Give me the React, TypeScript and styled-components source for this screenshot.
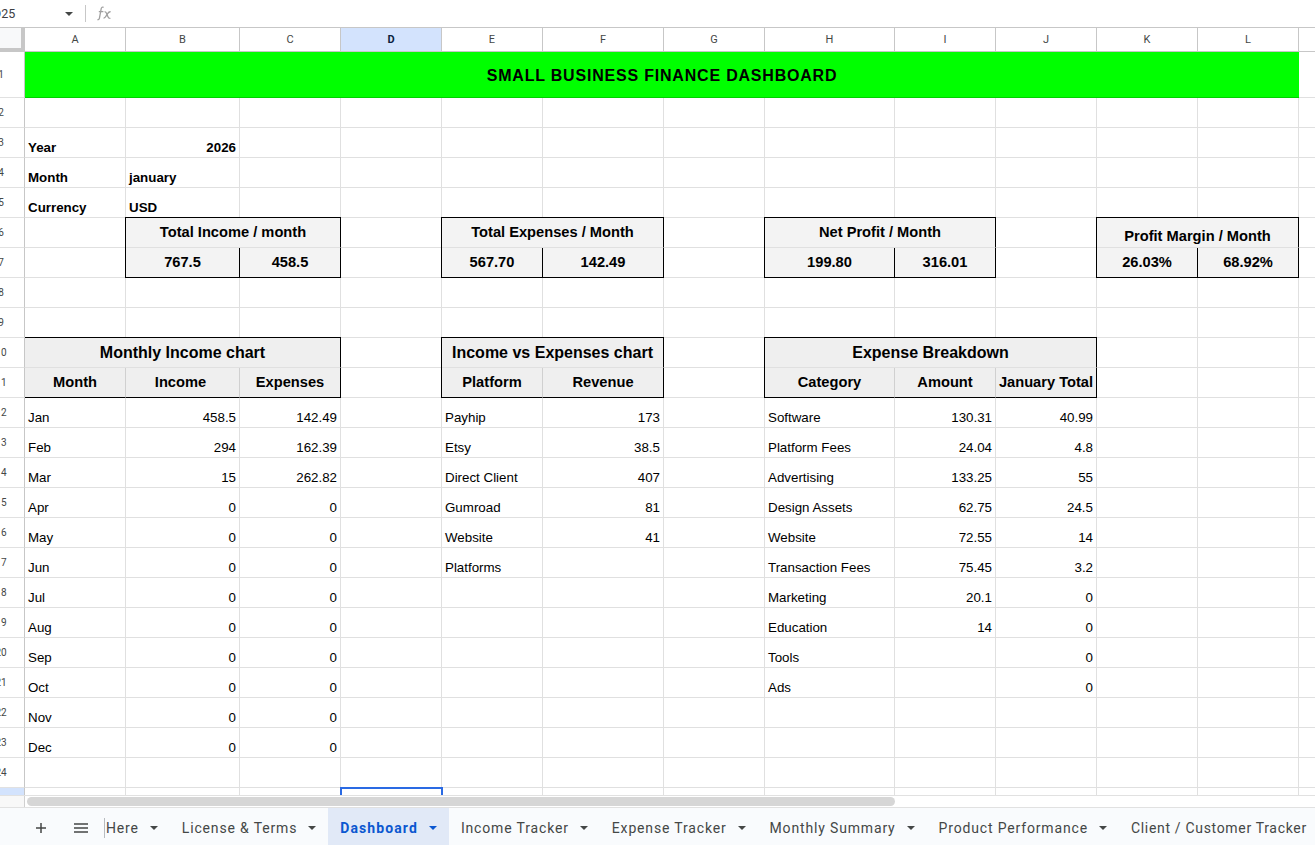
import React from "react";
import styled, { createGlobalStyle } from "styled-components";

const Global = createGlobalStyle`
  html, body { margin: 0; padding: 0; height: 100%; overflow: hidden; background: #fff; }
  #root { height: 100%; }
`;

const Page = styled.div`
  height: 845px;
  width: 1315px;
  display: flex;
  flex-direction: column;
  overflow: hidden;
  font-family: "Liberation Sans", Arial, sans-serif;
`;

const FormulaBar = styled.div`
  height: 27px;
  flex: none;
  display: flex;
  align-items: center;
  box-sizing: border-box;
  background: #fff;
`;

const NameBox = styled.div`
  width: 72px;
  flex: none;
  margin-left: -7px;
  font-family: Roboto, sans-serif;
  font-size: 12.5px;
  color: #3c4043;
`;

const Caret = styled.span<{ $color?: string }>`
  display: inline-block;
  flex: none;
  width: 0;
  height: 0;
  border-left: 4px solid transparent;
  border-right: 4px solid transparent;
  border-top: 4px solid ${(p) => p.$color ?? "#444746"};
`;

const VDivider = styled.div`
  width: 1px;
  height: 17px;
  margin: 0 11px 0 12px;
  background: #c7c7c7;
`;

const Fx = styled.svg`
  width: 15px;
  height: 15px;
`;

const Sheet = styled.div`
  height: 768px;
  flex: none;
  overflow: hidden;
  display: grid;
  grid-template-columns: 25px 101px 114px 101px 101px 101px 121px 101px 130px 101px 101px 101px 101px 17px;
  grid-template-rows: 25px 46px repeat(24, 30px);
  align-content: start;
  background: #fff;
`;

const Corner = styled.div`
  box-sizing: border-box;
  background: #f8f9fa;
  border-top: 1px solid #c7c7c7;
  border-right: 4px solid #c7c7c7;
  border-bottom: 4px solid #c7c7c7;
`;

const ColHead = styled.div<{ $active?: boolean }>`
  box-sizing: border-box;
  display: flex;
  align-items: center;
  justify-content: center;
  font-family: Roboto, sans-serif;
  font-size: 11px;
  color: ${(p) => (p.$active ? "#0b1f3f" : "#444746")};
  font-weight: ${(p) => (p.$active ? 700 : 400)};
  background: ${(p) => (p.$active ? "#d3e3fd" : "#fff")};
  border-top: 1px solid #c7c7c7;
  border-right: 1px solid #c7c7c7;
  border-bottom: 1px solid #c7c7c7;
`;

const RowHead = styled.div<{ $active?: boolean }>`
  box-sizing: border-box;
  overflow: hidden;
  display: flex;
  align-items: center;
  font-family: Roboto, sans-serif;
  font-size: 10px;
  color: #444746;
  background: ${(p) => (p.$active ? "#d3e3fd" : "#fff")};
  border-right: 1px solid #c7c7c7;
  border-bottom: 1px solid #e1e1e1;
`;

const RowLabel = styled.span`
  flex: none;
  width: 46px;
  margin-left: -22px;
  margin-top: -1px;
  text-align: center;
`;

const Cell = styled.div<{
  $span?: number;
  $right?: boolean;
  $bold?: boolean;
  $center?: boolean;
  $size?: number;
  $bg?: string;
  $bt?: boolean;
  $bb?: boolean;
  $bl?: boolean;
  $br?: boolean;
  $soft?: boolean;
  $low?: boolean;
  $nudge?: number;
}>`
  box-sizing: border-box;
  ${(p) => (p.$span ? `grid-column: span ${p.$span};` : "")}
  display: flex;
  align-items: ${(p) => (p.$center ? "center" : "flex-end")};
  justify-content: ${(p) => (p.$center ? "center" : p.$right ? "flex-end" : "flex-start")};
  padding: ${(p) => (p.$center ? "0" : "0 3px 1px 3px")};
  ${(p) => (p.$low ? "padding-top: 8px;" : "")}
  ${(p) => (p.$nudge ? `padding-right: ${p.$nudge}px;` : "")}
  min-width: 0;
  white-space: nowrap;
  overflow: hidden;
  font-size: ${(p) => p.$size ?? 13.33}px;
  font-weight: ${(p) => (p.$bold ? 700 : 400)};
  line-height: 17px;
  color: #000;
  background: ${(p) => p.$bg ?? "#fff"};
  border-right: 1px solid ${(p) => (p.$br ? "#000" : p.$soft ? "#d0d0d0" : "#e0e0e0")};
  border-bottom: 1px solid ${(p) => (p.$bb ? "#000" : "#e0e0e0")};
  ${(p) => (p.$bt ? "box-shadow: 0 -1px 0 #000;" : "")}
  ${(p) => (p.$bl ? "box-shadow: -1px 0 0 #000" + (p.$bt ? ", 0 -1px 0 #000, -1px -1px 0 #000;" : ";") : "")}
`;

const Banner = styled.div`
  grid-column: span 12;
  box-sizing: border-box;
  display: flex;
  align-items: center;
  justify-content: center;
  padding-top: 3px;
  background: #00ff00;
  border-bottom: 1px solid #00d000;
  font-size: 16px;
  font-weight: 700;
  letter-spacing: 0.8px;
  color: #000;
  white-space: nowrap;
`;

const SelectedCell = styled.div`
  box-sizing: border-box;
  margin: -1px -1px 0 -1px;
  border: 2px solid #2a6ae3;
  border-bottom: 0;
  background: #fff;
  position: relative;
`;

const ScrollRow = styled.div`
  height: 13px;
  flex: none;
  display: flex;
  align-items: stretch;
  box-sizing: border-box;
  background: #fff;
  border-top: 1px solid #e1e1e1;
  border-bottom: 1px solid #e1e1e1;
`;

const ScrollCorner = styled.div`
  width: 25px;
  flex: none;
  box-sizing: border-box;
  background: #f8f8f8;
  border-right: 1px solid #d0d0d0;
`;

const ScrollThumb = styled.div`
  width: 868px;
  height: 9px;
  margin: 1px 0 0 2px;
  border-radius: 5px;
  background: #d6d6d6;
`;

const TabBar = styled.div`
  height: 37px;
  flex: none;
  display: flex;
  align-items: stretch;
  background: #f9fbfd;
  overflow: hidden;
  font-family: Roboto, sans-serif;
  font-size: 14px;
  color: #444746;
`;

const IconButton = styled.div<{ $w: number; $ml?: number }>`
  flex: none;
  width: ${(p) => p.$w}px;
  margin-left: ${(p) => p.$ml ?? 0}px;
  padding-top: 2px;
  display: flex;
  align-items: center;
  justify-content: center;
`;

const TabDivider = styled.div`
  flex: none;
  width: 1px;
  height: 20px;
  margin: 2px 0 0 4px;
  align-self: center;
  background: #b8bcc0;
`;

const Tab = styled.div<{ $active?: boolean; $flush?: boolean; $last?: boolean }>`
  flex: none;
  display: flex;
  align-items: center;
  padding: 2px 12px 0 ${(p) => (p.$flush ? "1px" : "12px")};
  white-space: nowrap;
  background: ${(p) => (p.$active ? "#e1e9f7" : "transparent")};
  color: ${(p) => (p.$active ? "#0b57d0" : "#444746")};
  font-weight: ${(p) => (p.$active ? 700 : 400)};
  letter-spacing: ${(p) => (p.$active ? "1.1px" : p.$last ? "0.68px" : "0.84px")};
`;

const TabCaret = styled(Caret)`
  margin-left: 11px;
`;

const columns = ["A", "B", "C", "D", "E", "F", "G", "H", "I", "J", "K", "L"];
const GREY = "#f3f3f3";
const HEAD = "#efefef";
const HEADER_SIZE = 14.67;

const months: [string, string, string][] = [
  ["Jan", "458.5", "142.49"],
  ["Feb", "294", "162.39"],
  ["Mar", "15", "262.82"],
  ["Apr", "0", "0"],
  ["May", "0", "0"],
  ["Jun", "0", "0"],
  ["Jul", "0", "0"],
  ["Aug", "0", "0"],
  ["Sep", "0", "0"],
  ["Oct", "0", "0"],
  ["Nov", "0", "0"],
  ["Dec", "0", "0"],
];

const platforms: [string, string][] = [
  ["Payhip", "173"],
  ["Etsy", "38.5"],
  ["Direct Client", "407"],
  ["Gumroad", "81"],
  ["Website", "41"],
  ["Platforms", ""],
];

const expenses: [string, string, string][] = [
  ["Software", "130.31", "40.99"],
  ["Platform Fees", "24.04", "4.8"],
  ["Advertising", "133.25", "55"],
  ["Design Assets", "62.75", "24.5"],
  ["Website", "72.55", "14"],
  ["Transaction Fees", "75.45", "3.2"],
  ["Marketing", "20.1", "0"],
  ["Education", "14", "0"],
  ["Tools", "", "0"],
  ["Ads", "", "0"],
];

const tabs = [
  "Here",
  "License & Terms",
  "Dashboard",
  "Income Tracker",
  "Expense Tracker",
  "Monthly Summary",
  "Product Performance",
];

const Row = ({ n, active, children }: { n: number; active?: boolean; children: React.ReactNode }) => (
  <>
    <RowHead $active={active}>
      <RowLabel>{n}</RowLabel>
    </RowHead>
    {children}
  </>
);

const Blanks = ({ n }: { n: number }) => (
  <>
    {Array.from({ length: n }, (_, i) => (
      <Cell key={i} />
    ))}
  </>
);

const dataRow = (i: number) => {
  const m = months[i];
  const p = platforms[i];
  const e = expenses[i];
  return (
    <Row n={12 + i} key={i}>
      <Cell>{m?.[0]}</Cell>
      <Cell $right>{m?.[1]}</Cell>
      <Cell $right>{m?.[2]}</Cell>
      <Cell />
      <Cell>{p?.[0]}</Cell>
      <Cell $right>{p?.[1]}</Cell>
      <Cell />
      <Cell>{e?.[0]}</Cell>
      <Cell $right>{e?.[1]}</Cell>
      <Cell $right>{e?.[2]}</Cell>
      <Blanks n={3} />
    </Row>
  );
};

export default function App() {
  return (
    <Page>
      <Global />
      <FormulaBar>
        <NameBox>D25</NameBox>
        <Caret />
        <VDivider />
        <Fx viewBox="0 0 15 15" fill="none" stroke="#a0a0a0" strokeWidth="1.3">
          <path d="M6.6 1.4C5.4.8 4.6 1.3 4.2 2.6L2.5 11.8C2.2 13.2 1.5 14 .4 13.6" />
          <path d="M1.8 5.6h4.6" />
          <path d="M7.6 5.6c1.2 0 1.6.6 2.2 2.2l1 2.6c.6 1.6 1.2 2.2 2.6 2" />
          <path d="M13.6 5.8c-1.2-.3-2 .3-3 1.8l-1.6 2.6c-.7 1.2-1.3 2-2.4 1.8" />
        </Fx>
      </FormulaBar>
      <Sheet>
        <Corner />
        {columns.map((c) => (
          <ColHead key={c} $active={c === "D"}>
            {c}
          </ColHead>
        ))}
        <ColHead />

        <Row n={1}>
          <Banner>SMALL BUSINESS FINANCE DASHBOARD</Banner>
          <Cell />
        </Row>
        <Row n={2}>
          <Blanks n={13} />
        </Row>
        <Row n={3}>
          <Cell $bold>Year</Cell>
          <Cell $bold $right>2026</Cell>
          <Blanks n={11} />
        </Row>
        <Row n={4}>
          <Cell $bold>Month</Cell>
          <Cell $bold>january</Cell>
          <Blanks n={11} />
        </Row>
        <Row n={5}>
          <Cell $bold>Currency</Cell>
          <Cell $bold>USD</Cell>
          <Blanks n={11} />
        </Row>
        <Row n={6}>
          <Cell />
          <Cell $span={2} $center $bold $size={HEADER_SIZE} $bg={GREY} $bt $bl $br>Total Income / month</Cell>
          <Cell />
          <Cell $span={2} $center $bold $size={HEADER_SIZE} $bg={GREY} $bt $bl $br>Total Expenses / Month</Cell>
          <Cell />
          <Cell $span={2} $center $bold $size={HEADER_SIZE} $bg={GREY} $bt $bl $br>Net Profit / Month</Cell>
          <Cell />
          <Cell $span={2} $center $low $bold $size={HEADER_SIZE} $bg={GREY} $bt $bl $br>Profit Margin / Month</Cell>
          <Cell />
        </Row>
        <Row n={7}>
          <Cell />
          <Cell $center $bold $size={HEADER_SIZE} $bg={GREY} $bl $bb $br>767.5</Cell>
          <Cell $center $bold $size={HEADER_SIZE} $bg={GREY} $bb $br>458.5</Cell>
          <Cell />
          <Cell $center $bold $size={HEADER_SIZE} $bg={GREY} $bl $bb $br>567.70</Cell>
          <Cell $center $bold $size={HEADER_SIZE} $bg={GREY} $bb $br>142.49</Cell>
          <Cell />
          <Cell $center $bold $size={HEADER_SIZE} $bg={GREY} $bl $bb $br>199.80</Cell>
          <Cell $center $bold $size={HEADER_SIZE} $bg={GREY} $bb $br>316.01</Cell>
          <Cell />
          <Cell $center $bold $size={HEADER_SIZE} $bg={GREY} $bl $bb $br>26.03%</Cell>
          <Cell $center $bold $size={HEADER_SIZE} $bg={GREY} $bb $br>68.92%</Cell>
          <Cell />
        </Row>
        <Row n={8}>
          <Blanks n={13} />
        </Row>
        <Row n={9}>
          <Blanks n={13} />
        </Row>
        <Row n={10}>
          <Cell $span={3} $center $bold $size={16} $bg={HEAD} $bt $br>Monthly Income chart</Cell>
          <Cell />
          <Cell $span={2} $center $bold $size={16} $bg={HEAD} $bt $bl $br>Income vs Expenses chart</Cell>
          <Cell />
          <Cell $span={3} $center $bold $size={16} $bg={HEAD} $bt $bl $br>Expense Breakdown</Cell>
          <Blanks n={3} />
        </Row>
        <Row n={11}>
          <Cell $center $bold $size={HEADER_SIZE} $bg={HEAD} $soft $bb>Month</Cell>
          <Cell $center $bold $size={HEADER_SIZE} $bg={HEAD} $soft $bb $nudge={4}>Income</Cell>
          <Cell $center $bold $size={HEADER_SIZE} $bg={HEAD} $bb $br>Expenses</Cell>
          <Cell />
          <Cell $center $bold $size={HEADER_SIZE} $bg={HEAD} $soft $bl $bb>Platform</Cell>
          <Cell $center $bold $size={HEADER_SIZE} $bg={HEAD} $bb $br>Revenue</Cell>
          <Cell />
          <Cell $center $bold $size={HEADER_SIZE} $bg={HEAD} $soft $bl $bb>Category</Cell>
          <Cell $center $bold $size={HEADER_SIZE} $bg={HEAD} $soft $bb>Amount</Cell>
          <Cell $center $bold $size={HEADER_SIZE} $bg={HEAD} $bb $br>January Total</Cell>
          <Blanks n={3} />
        </Row>
        {months.map((_, i) => dataRow(i))}
        <Row n={24}>
          <Blanks n={13} />
        </Row>
        <Row n={25} active>
          <Blanks n={3} />
          <SelectedCell />
          <Blanks n={9} />
        </Row>
      </Sheet>
      <ScrollRow>
        <ScrollCorner />
        <ScrollThumb />
      </ScrollRow>
      <TabBar>
        <IconButton $w={42} $ml={20}>
          <svg width="12" height="12" viewBox="0 0 12 12" fill="none" stroke="#444746" strokeWidth="1.5">
            <path d="M6 1v10M1 6h10" />
          </svg>
        </IconButton>
        <IconButton $w={38}>
          <svg width="14" height="10" viewBox="0 0 14 10" fill="none" stroke="#444746" strokeWidth="1.4">
            <path d="M0 1h14M0 5h14M0 9h14" />
          </svg>
        </IconButton>
        <TabDivider />
        {tabs.map((t, i) => (
          <Tab key={t} $flush={i === 0} $active={t === "Dashboard"}>
            {t}
            <TabCaret $color={t === "Dashboard" ? "#0b57d0" : "#444746"} />
          </Tab>
        ))}
        <Tab $last>Client / Customer Tracker</Tab>
      </TabBar>
    </Page>
  );
}
